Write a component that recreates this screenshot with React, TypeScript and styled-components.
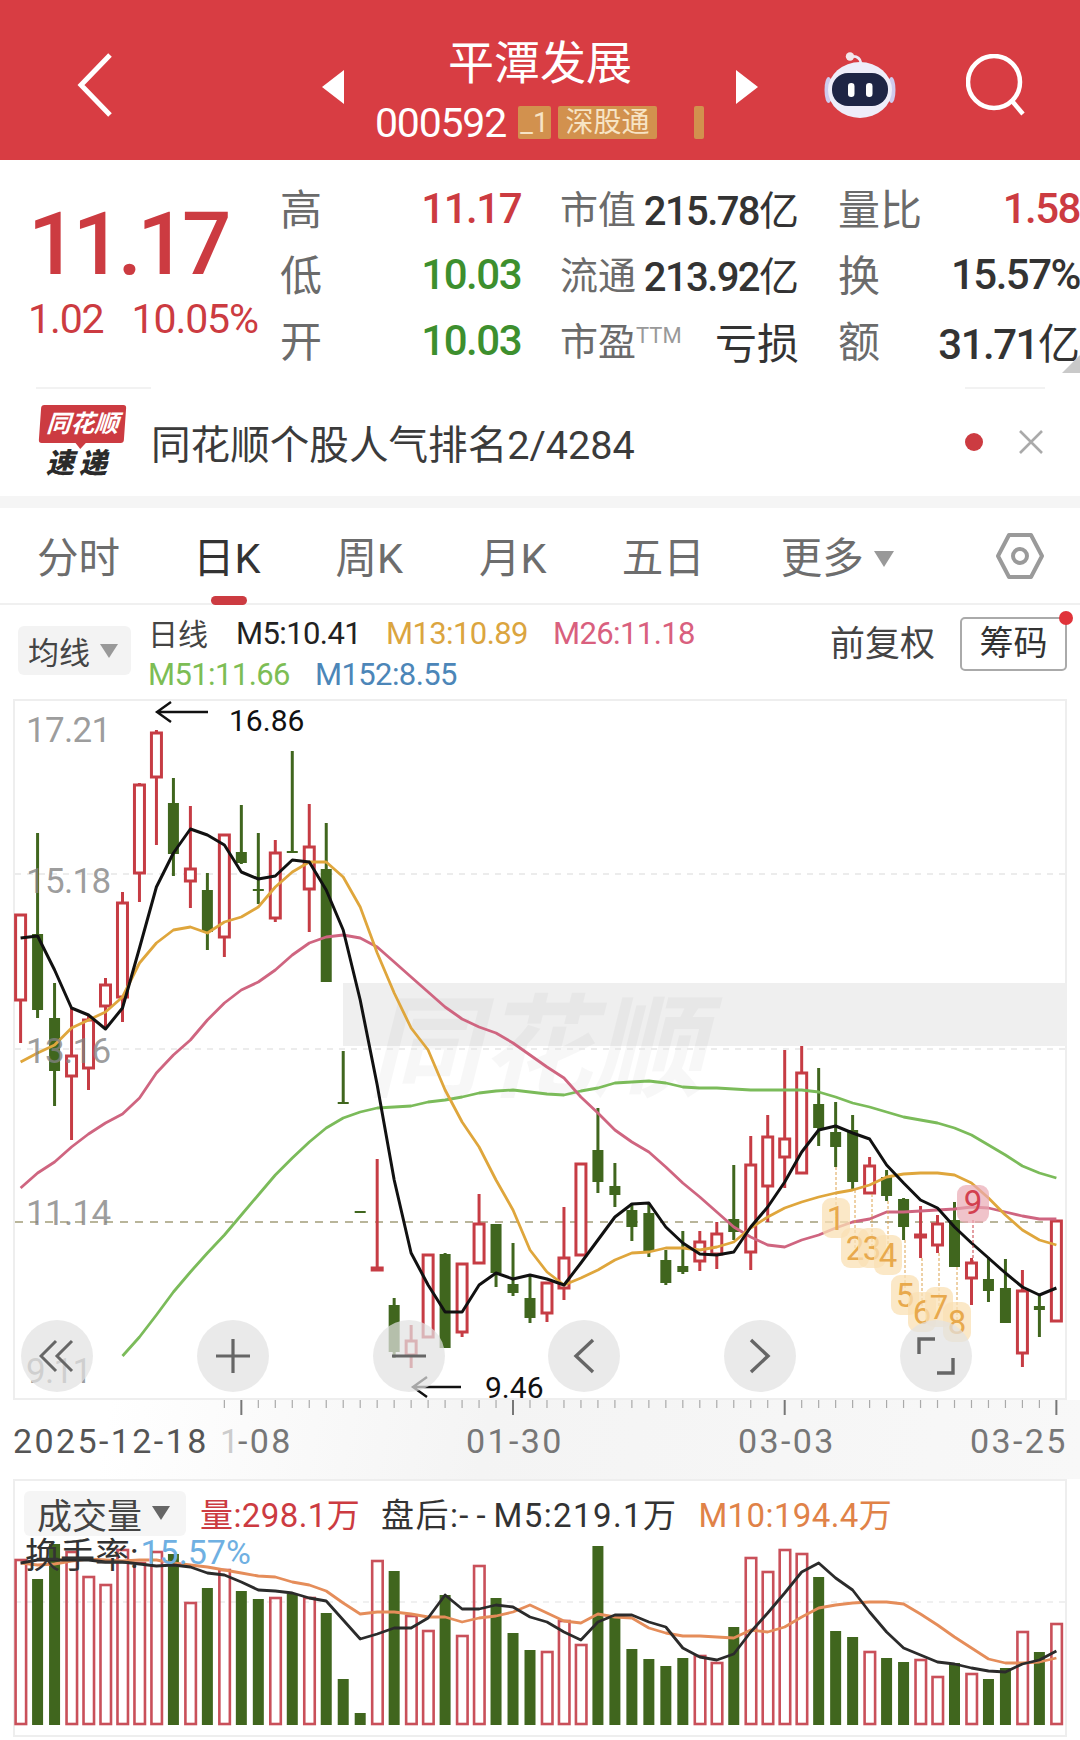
import React from "react";
import styled, { createGlobalStyle } from "styled-components";

const FONT = `Roboto, "Noto Sans CJK SC", sans-serif`;
const RED = "#cc3b41";
const GREEN = "#3d8f2e";
const CANDLE_RED = "#c63c44";
const CANDLE_GREEN = "#40661e";

const GlobalStyle = createGlobalStyle`
  html, body { margin: 0; padding: 0; background: #fff; }
  * { box-sizing: border-box; }
`;

const px = (i: number) => 20.6 + 16.98 * i;
const path = (ys: number[], start = 0) =>
  ys.map((y, i) => `${i === 0 ? "M" : "L"}${px(start + i).toFixed(1)} ${y}`).join(" ");

// wick top, body top, body bottom, wick bottom, colour
type Candle = [number, number, number, number, "r" | "g"];
const candles: Candle[] = [
  [915, 915, 1000, 1043, "r"],
  [833, 934, 1010, 1018, "g"],
  [983, 1018, 1071, 1106, "g"],
  [1008, 1056, 1076, 1140, "r"],
  [1015, 1020, 1068, 1090, "r"],
  [978, 985, 1006, 1028, "r"],
  [892, 903, 997, 1022, "r"],
  [783, 785, 873, 902, "r"],
  [730, 733, 777, 845, "r"],
  [778, 803, 854, 876, "g"],
  [806, 869, 881, 908, "r"],
  [873, 890, 932, 950, "g"],
  [834, 835, 937, 957, "r"],
  [805, 852, 863, 864, "g"],
  [833, 889, 891, 904, "g"],
  [840, 853, 918, 922, "r"],
  [751, 851, 853, 853, "g"],
  [804, 847, 889, 932, "r"],
  [823, 869, 982, 982, "g"],
  [1051, 1102, 1104, 1104, "g"],
  [1211, 1211, 1213, 1213, "g"],
  [1159, 1268, 1269, 1270, "r"],
  [1298, 1305, 1352, 1358, "g"],
  [1325, 1341, 1355, 1368, "r"],
  [1254, 1255, 1337, 1337, "r"],
  [1253, 1254, 1348, 1348, "g"],
  [1264, 1264, 1332, 1337, "r"],
  [1194, 1224, 1263, 1263, "r"],
  [1224, 1224, 1273, 1287, "g"],
  [1243, 1284, 1293, 1296, "g"],
  [1275, 1298, 1318, 1323, "g"],
  [1282, 1283, 1313, 1322, "r"],
  [1207, 1258, 1288, 1300, "r"],
  [1164, 1164, 1255, 1256, "r"],
  [1108, 1150, 1182, 1193, "g"],
  [1163, 1186, 1195, 1207, "g"],
  [1203, 1210, 1227, 1241, "g"],
  [1203, 1213, 1252, 1257, "g"],
  [1250, 1260, 1283, 1285, "g"],
  [1231, 1266, 1272, 1274, "g"],
  [1231, 1242, 1261, 1271, "r"],
  [1222, 1234, 1254, 1269, "r"],
  [1165, 1219, 1232, 1240, "g"],
  [1136, 1165, 1252, 1270, "r"],
  [1115, 1137, 1186, 1222, "r"],
  [1050, 1139, 1157, 1188, "r"],
  [1046, 1073, 1173, 1174, "r"],
  [1068, 1104, 1128, 1146, "g"],
  [1102, 1132, 1147, 1167, "g"],
  [1115, 1130, 1182, 1190, "g"],
  [1157, 1166, 1193, 1194, "r"],
  [1170, 1177, 1196, 1201, "g"],
  [1198, 1199, 1227, 1240, "g"],
  [1206, 1235, 1236, 1258, "r"],
  [1215, 1224, 1245, 1253, "r"],
  [1202, 1220, 1267, 1267, "g"],
  [1258, 1263, 1278, 1305, "r"],
  [1257, 1279, 1291, 1302, "g"],
  [1259, 1288, 1323, 1323, "g"],
  [1270, 1291, 1353, 1367, "r"],
  [1295, 1306, 1310, 1337, "g"],
  [1220, 1221, 1321, 1321, "r"],
];

const ma5 = [938, 936, 970, 1008, 1015, 1029, 1008, 948, 887, 853, 829, 835, 845, 872, 879, 876, 860, 862, 890, 930, 1000, 1085, 1180, 1253, 1285, 1312, 1312, 1285, 1273, 1279, 1275, 1279, 1285, 1263, 1240, 1217, 1204, 1203, 1227, 1243, 1254, 1255, 1252, 1227, 1207, 1182, 1152, 1130, 1126, 1133, 1139, 1165, 1183, 1200, 1208, 1227, 1243, 1258, 1273, 1287, 1295, 1288];
const ma13 = [1062, 1053, 1045, 1028, 1020, 1012, 997, 963, 943, 930, 927, 933, 922, 917, 907, 887, 872, 862, 862, 877, 907, 953, 993, 1028, 1050, 1090, 1122, 1147, 1180, 1210, 1250, 1272, 1285, 1278, 1270, 1260, 1253, 1252, 1248, 1248, 1250, 1247, 1242, 1228, 1217, 1208, 1202, 1197, 1193, 1190, 1185, 1177, 1174, 1173, 1173, 1175, 1183, 1198, 1215, 1230, 1240, 1245];
const ma26 = [1188, 1173, 1162, 1147, 1134, 1123, 1114, 1098, 1073, 1055, 1040, 1020, 1003, 990, 982, 970, 955, 943, 937, 935, 938, 947, 962, 977, 992, 1007, 1019, 1027, 1033, 1043, 1055, 1067, 1078, 1097, 1113, 1130, 1142, 1152, 1167, 1183, 1197, 1212, 1227, 1237, 1245, 1247, 1240, 1235, 1228, 1222, 1219, 1212, 1212, 1211, 1210, 1209, 1207, 1208, 1212, 1216, 1219, 1219];
const ma51 = [1356, 1337, 1315, 1292, 1272, 1253, 1235, 1215, 1195, 1175, 1158, 1142, 1128, 1118, 1112, 1108, 1107, 1106, 1102, 1100, 1097, 1093, 1091, 1090, 1092, 1094, 1095, 1091, 1088, 1083, 1082, 1081, 1083, 1087, 1088, 1088, 1089, 1090, 1090, 1090, 1090, 1092, 1097, 1103, 1107, 1112, 1117, 1120, 1123, 1128, 1135, 1145, 1155, 1166, 1173, 1178];

// volume bars, y of the top edge
const volumes: [number, "r" | "g"][] = [
  [1560, "r"], [1579, "g"], [1544, "g"], [1552, "r"], [1577, "r"], [1585, "r"], [1550, "r"], [1563, "r"], [1552, "r"], [1554, "g"],
  [1603, "r"], [1588, "g"], [1570, "r"], [1591, "g"], [1599, "g"], [1598, "r"], [1594, "g"], [1598, "r"], [1613, "g"], [1679, "g"],
  [1713, "g"], [1561, "r"], [1571, "g"], [1616, "r"], [1631, "r"], [1595, "g"], [1636, "r"], [1566, "r"], [1598, "g"], [1633, "g"],
  [1650, "g"], [1652, "r"], [1621, "r"], [1645, "r"], [1546, "g"], [1615, "g"], [1649, "g"], [1659, "g"], [1666, "g"], [1658, "g"],
  [1656, "r"], [1663, "r"], [1627, "g"], [1558, "r"], [1572, "r"], [1550, "r"], [1554, "r"], [1577, "g"], [1631, "g"], [1637, "g"],
  [1652, "r"], [1658, "g"], [1662, "g"], [1660, "r"], [1677, "r"], [1663, "g"], [1674, "r"], [1679, "g"], [1668, "g"], [1632, "r"],
  [1652, "g"], [1624, "r"],
];
const volMa5 = [1563, 1560, 1560, 1560, 1560, 1562, 1562, 1564, 1566, 1565, 1567, 1573, 1575, 1582, 1590, 1591, 1593, 1598, 1601, 1620, 1639, 1634, 1628, 1628, 1618, 1595, 1609, 1609, 1605, 1607, 1617, 1622, 1632, 1640, 1622, 1615, 1615, 1622, 1627, 1648, 1657, 1660, 1654, 1632, 1613, 1593, 1572, 1563, 1578, 1590, 1612, 1632, 1648, 1655, 1662, 1664, 1668, 1671, 1672, 1664, 1660, 1651];
const volMa10 = [1563, 1565, 1564, 1561, 1559, 1560, 1561, 1560, 1560, 1563, 1565, 1567, 1570, 1573, 1576, 1577, 1582, 1585, 1591, 1603, 1614, 1612, 1612, 1614, 1617, 1617, 1622, 1618, 1616, 1612, 1605, 1613, 1621, 1623, 1614, 1617, 1618, 1628, 1633, 1636, 1636, 1637, 1638, 1630, 1632, 1627, 1617, 1608, 1605, 1603, 1602, 1602, 1604, 1614, 1625, 1637, 1648, 1659, 1663, 1663, 1662, 1658];

const badges = [
  { n: "1", x: 836, y: 1218, from: 1167 },
  { n: "2", x: 855, y: 1248, from: 1190 },
  { n: "3", x: 872, y: 1248, from: 1194 },
  { n: "4", x: 888, y: 1255, from: 1201 },
  { n: "5", x: 905, y: 1295, from: 1240 },
  { n: "6", x: 922, y: 1312, from: 1258 },
  { n: "7", x: 939, y: 1307, from: 1253 },
  { n: "8", x: 957, y: 1322, from: 1267 },
];

function CandleMark({ c, i }: { c: Candle; i: number }) {
  const x = px(i);
  const red = c[4] === "r";
  const color = red ? CANDLE_RED : CANDLE_GREEN;
  return (
    <g>
      <line x1={x} x2={x} y1={c[0]} y2={c[3]} stroke={color} strokeWidth={3} />
      {red ? (
        <rect x={x - 5} y={c[1]} width={10} height={Math.max(c[2] - c[1], 2)} fill="#fff" stroke={color} strokeWidth={3} />
      ) : (
        <rect x={x - 5.5} y={c[1]} width={11} height={c[2] - c[1]} fill={color} />
      )}
    </g>
  );
}

function KlineChart() {
  return (
    <ChartSvg viewBox="13 699 1054 701">
      <rect x={343} y={983} width={724} height={63} fill="#efefef" />
      <text x={368} y={1088} fontSize={112} fontStyle="italic" fontWeight={700} fill="#000" fillOpacity={0.03} fontFamily={FONT}>
        同花顺
      </text>
      <line x1={15} x2={1065} y1={874} y2={874} stroke="#e6e6e6" strokeWidth={1.5} strokeDasharray="6 6" />
      <line x1={15} x2={1065} y1={1049} y2={1049} stroke="#e6e6e6" strokeWidth={1.5} strokeDasharray="6 6" />
      <line x1={15} x2={1065} y1={1222} y2={1222} stroke="#b9b59a" strokeWidth={2} strokeDasharray="8 7" />
      {candles.map((c, i) => (
        <CandleMark key={i} c={c} i={i} />
      ))}
      <path d={path(ma51, 6)} fill="none" stroke="#7bbb5a" strokeWidth={2.8} strokeLinejoin="round" />
      <path d={path(ma26)} fill="none" stroke="#cf6580" strokeWidth={2.8} strokeLinejoin="round" />
      <path d={path(ma13)} fill="none" stroke="#dfa63c" strokeWidth={2.8} strokeLinejoin="round" />
      <path d={path(ma5)} fill="none" stroke="#111" strokeWidth={3} strokeLinejoin="round" />
      {badges.map((b) => (
        <line key={b.n} x1={b.x} x2={b.x} y1={b.from} y2={b.y} stroke="#dca24f" strokeWidth={1} strokeDasharray="3 2" />
      ))}
      {badges.map((b) => (
        <g key={b.n}>
          <rect x={b.x - 14} y={b.y - 20} width={28} height={40} rx={9} fill="#fae0b4" opacity={0.75} />
          <text x={b.x} y={b.y + 12} fontSize={33} textAnchor="middle" fill="#e8a94c" fontFamily={FONT}>
            {b.n}
          </text>
        </g>
      ))}
      <line x1={973} x2={973} y1={1220} y2={1263} stroke={CANDLE_RED} strokeWidth={1} strokeDasharray="3 2" />
      <rect x={957} y={1185} width={32} height={38} rx={9} fill="#e9a9b4" opacity={0.7} />
      <text x={973} y={1214} fontSize={33} textAnchor="middle" fill="#d3404f" fontFamily={FONT}>
        9
      </text>
      <g fill="rgba(130,130,130,0.78)" fontSize={35} fontFamily={FONT} letterSpacing={-0.7}>
        <text x={26} y={742}>17.21</text>
        <text x={26} y={893}>15.18</text>
        <text x={26} y={1063}>13.16</text>
        <text x={26} y={1225}>11.14</text>
        <text x={26} y={1383}>9.11</text>
      </g>
      <g fill="none" stroke="#111" strokeWidth={2.4}>
        <path d="M208 712H157M171 702L157 712L171 722" />
        <path d="M461 1387H413M427 1377L413 1387L427 1397" />
      </g>
      <g fill="#111" fontSize={30} fontFamily={FONT}>
        <text x={229} y={731}>16.86</text>
        <text x={485} y={1398}>9.46</text>
      </g>
    </ChartSvg>
  );
}

function Axis() {
  const ticks = [];
  for (let i = 12; i <= 61; i++) {
    const major = (i - 13) % 16 === 0;
    ticks.push(
      <line key={i} x1={px(i)} x2={px(i)} y1={1400} y2={major ? 1415 : 1408} stroke={major ? "#777" : "#aaa"} strokeWidth={major ? 2 : 1.2} />
    );
  }
  return (
    <AxisSvg viewBox="0 1400 1080 79">
      {ticks}
      <g fontSize={34} fontFamily={FONT} letterSpacing={2.4} fill="#777">
        <text x={13} y={1453} fill="#555">2025-12-18</text>
        <text x={220} y={1453} fill="#ccc">1</text>
        <text x={238} y={1453}>-08</text>
        <text x={466} y={1453}>01-30</text>
        <text x={738} y={1453}>03-03</text>
        <text x={970} y={1453}>03-25</text>
      </g>
    </AxisSvg>
  );
}

function VolumeChart() {
  return (
    <VolumeSvg viewBox="13 1479 1054 258">
      <line x1={15} x2={1065} y1={1602} y2={1602} stroke="#ececec" strokeWidth={1.5} strokeDasharray="6 6" />
      {volumes.map(([top, kind], i) =>
        kind === "r" ? (
          <rect key={i} x={px(i) - 5} y={top} width={10.5} height={1724 - top} fill="none" stroke="#c9505a" strokeWidth={2.6} />
        ) : (
          <rect key={i} x={px(i) - 5.5} y={top} width={11} height={1725 - top} fill={CANDLE_GREEN} />
        )
      )}
      <path d={path(volMa10)} fill="none" stroke="#e58d5a" strokeWidth={2.8} strokeLinejoin="round" />
      <path d={path(volMa5)} fill="none" stroke="#2b2b2b" strokeWidth={2.8} strokeLinejoin="round" />
    </VolumeSvg>
  );
}

function Robot() {
  return (
    <svg width="72" height="66" viewBox="0 0 72 66">
      <path d="M28 4.500C33 4 36 6 37 11" stroke="#eceaf6" strokeWidth="2.6" fill="none" />
      <circle cx="26" cy="4.500" r="4.200" fill="#f3e6ea" />
      <ellipse cx="4.500" cy="38" rx="4" ry="13" fill="#cfcbee" />
      <ellipse cx="67.500" cy="38" rx="4" ry="13" fill="#cfcbee" />
      <ellipse cx="36" cy="38" rx="32" ry="28" fill="#eeedf9" />
      <rect x="8" y="21" width="56" height="33" rx="16" fill="#1e2545" />
      <rect x="24" y="31" width="6.500" height="14" rx="3.200" fill="#fff" />
      <rect x="42" y="31" width="6.500" height="14" rx="3.200" fill="#fff" />
    </svg>
  );
}

function App() {
  return (
    <Page>
      <GlobalStyle />
      <Header>
        <LeftCell>
          <svg width="38" height="66" viewBox="0 0 38 66">
            <path d="M33 3L4 33L33 63" fill="none" stroke="#fff" strokeWidth="5" />
          </svg>
        </LeftCell>
        <CenterCell>
          <Arrow viewBox="0 0 22 34">
            <path d="M22 0L0 17L22 34Z" fill="#fff" />
          </Arrow>
          <TitleStack>
            <Title>平潭发展</Title>
            <SubRow>
              <Code>000592</Code>
              <Tag $w={33}>_1</Tag>
              <Tag $w={99}>深股通</Tag>
              <TagStub />
            </SubRow>
          </TitleStack>
          <Arrow viewBox="0 0 22 34">
            <path d="M0 0L22 17L0 34Z" fill="#fff" />
          </Arrow>
        </CenterCell>
        <RightCell>
          <Robot />
          <svg width="60" height="62" viewBox="0 0 60 62">
            <circle cx="28" cy="28" r="26" fill="none" stroke="#fff" strokeWidth="4.5" />
            <path d="M46 47L57 60" stroke="#fff" strokeWidth="4.5" />
          </svg>
        </RightCell>
      </Header>
      <Quote>
        <PriceBlock>
          <Price>11.17</Price>
          <ChangeRow>
            <span>1.02</span>
            <span>10.05%</span>
          </ChangeRow>
        </PriceBlock>
        <StatGrid>
          <Stat><StatLabel $big>高</StatLabel><StatValue $color={RED}>11.17</StatValue></Stat>
          <Stat><StatLabel>市值</StatLabel><StatValue $narrow>215.78<Unit>亿</Unit></StatValue></Stat>
          <Stat><StatLabel $big>量比</StatLabel><StatValue $color={RED}>1.58</StatValue></Stat>
          <Stat><StatLabel $big>低</StatLabel><StatValue $color={GREEN}>10.03</StatValue></Stat>
          <Stat><StatLabel>流通</StatLabel><StatValue $narrow>213.92<Unit>亿</Unit></StatValue></Stat>
          <Stat><StatLabel $big>换</StatLabel><StatValue>15.57%</StatValue></Stat>
          <Stat><StatLabel $big>开</StatLabel><StatValue $color={GREEN}>10.03</StatValue></Stat>
          <Stat><StatLabel>市盈<Sup>TTM</Sup></StatLabel><StatValue><Unit>亏损</Unit></StatValue></Stat>
          <Stat><StatLabel $big>额</StatLabel><StatValue>31.71<Unit>亿</Unit></StatValue></Stat>
        </StatGrid>
        <Corner />
      </Quote>
      <News>
        <Logo>
          <LogoTag>同花顺</LogoTag>
          <LogoWord>速递</LogoWord>
        </Logo>
        <NewsText>同花顺个股人气排名2/4284</NewsText>
        <NewsDot />
        <svg width="26" height="26" viewBox="0 0 26 26">
          <path d="M2 2L24 24M24 2L2 24" stroke="#aaa" strokeWidth="2.6" />
        </svg>
      </News>
      <Gap />
      <TabBar>
        <Tab>分时</Tab>
        <Tab $active>日K</Tab>
        <Tab>周K</Tab>
        <Tab>月K</Tab>
        <Tab>五日</Tab>
        <Tab>更多<Caret $size={10} /></Tab>
        <Settings>
          <svg width="50" height="48" viewBox="0 0 50 48">
            <path d="M14 3H36L47 24L36 45H14L3 24Z" fill="none" stroke="#9a9a9a" strokeWidth="4" strokeLinejoin="round" />
            <circle cx="25" cy="24" r="7" fill="none" stroke="#9a9a9a" strokeWidth="4" />
          </svg>
        </Settings>
      </TabBar>
      <IndicatorBar>
        <Selector>均线<Caret $size={9} /></Selector>
        <MaBlock>
          <MaRow>
            <MaName>日线</MaName>
            <MaValue $color="#222" $w={150}>M5:10.41</MaValue>
            <MaValue $color="#dba53f" $w={167}>M13:10.89</MaValue>
            <MaValue $color="#d9607e">M26:11.18</MaValue>
          </MaRow>
          <MaRow>
            <MaValue $color="#7dbd55" $w={167}>M51:11.66</MaValue>
            <MaValue $color="#4c86b8">M152:8.55</MaValue>
          </MaRow>
        </MaBlock>
        <Adjust>前复权</Adjust>
        <ChipButton>筹码</ChipButton>
      </IndicatorBar>
      <ChartPanel>
        <KlineChart />
        <ControlRow>
          <RoundButton>
            <svg width="36" height="36" viewBox="0 0 36 36">
              <path d="M17 3L2 18L17 33M33 3L18 18L33 33" fill="none" stroke="#666" strokeWidth="3" />
            </svg>
          </RoundButton>
          <RoundButton>
            <svg width="36" height="36" viewBox="0 0 36 36">
              <path d="M18 1V35M1 18H35" fill="none" stroke="#666" strokeWidth="3.2" />
            </svg>
          </RoundButton>
          <RoundButton>
            <svg width="36" height="36" viewBox="0 0 36 36">
              <path d="M1 18H35" fill="none" stroke="#666" strokeWidth="3.2" />
            </svg>
          </RoundButton>
          <RoundButton>
            <svg width="22" height="36" viewBox="0 0 22 36">
              <path d="M20 2L3 18L20 34" fill="none" stroke="#666" strokeWidth="3.4" />
            </svg>
          </RoundButton>
          <RoundButton>
            <svg width="22" height="36" viewBox="0 0 22 36">
              <path d="M2 2L19 18L2 34" fill="none" stroke="#666" strokeWidth="3.4" />
            </svg>
          </RoundButton>
          <RoundButton>
            <svg width="38" height="38" viewBox="0 0 38 38">
              <path d="M18 2H2V17M20 36H36V21" fill="none" stroke="#666" strokeWidth="3.4" />
            </svg>
          </RoundButton>
        </ControlRow>
      </ChartPanel>
      <AxisStrip>
        <Axis />
      </AxisStrip>
      <VolumePanel>
        <VolumeChart />
        <VolumeLegend>
          <LegendRow>
            <VolumeSelector>成交量<Caret $size={9} $color="#666" /></VolumeSelector>
            <LegendText $color={RED}>量:298.1万</LegendText>
            <LegendText $color="#333" $spacing={1.4}>盘后:<WideDash>--</WideDash>M5:219.1万</LegendText>
            <LegendText $color="#e08248">M10:194.4万</LegendText>
          </LegendRow>
          <TurnoverRow>
            换手率:<TurnoverValue>15.57%</TurnoverValue>
          </TurnoverRow>
        </VolumeLegend>
      </VolumePanel>
    </Page>
  );
}

const Page = styled.div`
  position: relative;
  width: 1080px;
  height: 1740px;
  overflow: hidden;
  background: #fff;
  font-family: ${FONT};
`;
const Header = styled.header`
  display: grid;
  grid-template-columns: 322px 436px 1fr;
  height: 160px;
  background: #d83d43;
`;
const LeftCell = styled.div`
  display: flex;
  align-items: center;
  padding: 10px 0 0 77px;
`;
const CenterCell = styled.div`
  display: flex;
  justify-content: space-between;
  align-items: center;
  padding-top: 14px;
`;
const Arrow = styled.svg`
  width: 22px;
  height: 34px;
`;
const TitleStack = styled.div`
  display: flex;
  flex-direction: column;
  align-items: center;
  padding-top: 6px;
`;
const Title = styled.div`
  color: #fff;
  font-size: 46px;
  line-height: 50px;
  margin-bottom: 15px;
`;
const SubRow = styled.div`
  display: flex;
  align-items: center;
  height: 40px;
  width: 330px;
`;
const Code = styled.span`
  color: #fff;
  font-size: 41px;
  letter-spacing: -1.2px;
  width: 143px;
`;
const Tag = styled.span<{ $w: number }>`
  width: ${(p) => p.$w}px;
  height: 33px;
  margin-right: 7px;
  background: #d2914e;
  color: #f7e4c5;
  font-size: 28px;
  line-height: 33px;
  text-align: center;
  border-radius: 2px;
`;
const TagStub = styled.span`
  width: 10px;
  height: 33px;
  margin-left: 30px;
  background: #d2914e;
  border-radius: 2px;
`;
const RightCell = styled.div`
  display: flex;
  align-items: center;
  gap: 70px;
  padding: 10px 0 0 66px;
`;
const Quote = styled.section`
  position: relative;
  display: flex;
  height: 227px;
  padding: 15px 0 0 28px;
`;
const PriceBlock = styled.div`
  width: 253px;
`;
const Price = styled.div`
  color: ${RED};
  font-size: 87px;
  font-weight: 500;
  line-height: 90px;
  letter-spacing: -4.6px;
  margin: 24px 0 0 0;
`;
const ChangeRow = styled.div`
  display: flex;
  gap: 28px;
  color: ${RED};
  font-size: 41px;
  line-height: 46px;
  letter-spacing: -1.1px;
  margin-top: 7px;
`;
const StatGrid = styled.div`
  display: grid;
  grid-template-columns: 240px 238px 241px;
  grid-auto-rows: 66px;
  column-gap: 40px;
`;
const Stat = styled.div`
  display: flex;
  justify-content: space-between;
  align-items: center;
`;
const StatLabel = styled.span<{ $big?: boolean }>`
  color: #6b6b6b;
  font-size: ${(p) => (p.$big ? 42 : 38)}px;
  margin-top: -4px;
  margin-left: -1px;
`;
const StatValue = styled.span<{ $color?: string; $narrow?: boolean }>`
  color: ${(p) => p.$color ?? "#333"};
  font-size: ${(p) => (p.$narrow ? 40 : 42)}px;
  font-weight: 500;
  letter-spacing: ${(p) => (p.$narrow ? -1.6 : -1.5)}px;
`;
const Unit = styled.span`
  font-weight: 400;
  letter-spacing: 0;
`;
const Sup = styled.sup`
  font-size: 22px;
  color: #999;
  vertical-align: 12px;
  line-height: 0;
`;
const Corner = styled.span`
  position: absolute;
  right: 0;
  bottom: 14px;
  border-left: 18px solid transparent;
  border-bottom: 18px solid #c9c9c9;
`;
const News = styled.section`
  display: flex;
  align-items: center;
  height: 109px;
  padding: 0 36px;
  background:
    linear-gradient(#f2f2f2, #f2f2f2) 36px 0 / 115px 2px no-repeat,
    linear-gradient(#f2f2f2, #f2f2f2) 965px 0 / 80px 2px no-repeat;
`;
const Logo = styled.div`
  display: flex;
  flex-direction: column;
  align-items: center;
  width: 88px;
  margin: 2px 25px 0 2px;
`;
const LogoTag = styled.div`
  position: relative;
  width: 85px;
  height: 38px;
  background: ${RED};
  border-radius: 3px;
  color: #fff;
  font-size: 24px;
  font-weight: 700;
  font-style: italic;
  line-height: 38px;
  text-align: center;
  white-space: nowrap;
  transform: skewX(-4deg);
  &::after {
    content: "";
    position: absolute;
    left: 36px;
    bottom: -6px;
    border-left: 6px solid transparent;
    border-right: 6px solid transparent;
    border-top: 7px solid ${RED};
  }
`;
const LogoWord = styled.div`
  color: #2a2a2a;
  font-size: 28px;
  font-weight: 900;
  font-style: italic;
  letter-spacing: 5px;
  line-height: 32px;
  margin: 5px 0 0 -6px;
`;
const NewsText = styled.div`
  flex: 1;
  color: #3b3b3b;
  font-size: 39.6px;
`;
const NewsDot = styled.span`
  width: 18px;
  height: 18px;
  border-radius: 50%;
  background: ${RED};
  margin-right: 35px;
`;
const Gap = styled.div`
  height: 12px;
  background: #f5f5f5;
`;
const TabBar = styled.nav`
  display: flex;
  align-items: center;
  gap: 73px;
  height: 97px;
  padding: 6px 36px 0 37px;
  border-bottom: 2px solid #f0f0f0;
`;
const Tab = styled.div<{ $active?: boolean }>`
  position: relative;
  display: flex;
  align-items: center;
  color: ${(p) => (p.$active ? "#333" : "#6d6d6d")};
  font-size: 41.500px;
  line-height: 50px;
  &:first-child {
    margin-right: 5px;
  }
  &:nth-child(2) {
    margin: 0 2px 0 -5px;
  }
  &:nth-child(3) {
    margin-right: 3px;
  }
  &:nth-child(4) {
    margin-right: 2px;
  }
  &:nth-child(6) {
    margin-left: 3px;
  }
  ${(p) =>
    p.$active &&
    `&::after {
      content: "";
      position: absolute;
      left: 18px;
      bottom: -21px;
      width: 36px;
      height: 9px;
      border-radius: 5px;
      background: ${RED};
    }`}
`;
const Caret = styled.i<{ $size: number; $color?: string }>`
  display: inline-block;
  margin-left: 10px;
  border-left: ${(p) => p.$size}px solid transparent;
  border-right: ${(p) => p.$size}px solid transparent;
  border-top: ${(p) => p.$size * 1.6}px solid ${(p) => p.$color ?? "#999"};
`;
const Settings = styled.div`
  display: flex;
  margin-left: auto;
  margin-right: -1px;
  margin-top: -6px;
`;
const IndicatorBar = styled.div`
  display: flex;
  align-items: flex-start;
  height: 94px;
  padding: 0 13px 0 18px;
`;
const Selector = styled.div`
  display: flex;
  align-items: center;
  width: 113px;
  height: 49px;
  margin-top: 21px;
  padding-left: 10px;
  background: #f3f3f3;
  border-radius: 6px;
  color: #444;
  font-size: 31px;
`;
const MaBlock = styled.div`
  flex: 1;
  padding: 8px 0 0 17px;
`;
const MaRow = styled.div`
  display: flex;
  align-items: center;
  height: 41px;
`;
const MaName = styled.span`
  width: 88px;
  color: #444;
  font-size: 30px;
  margin-top: -4px;
`;
const MaValue = styled.span<{ $color: string; $w?: number }>`
  width: ${(p) => (p.$w ? `${p.$w}px` : "auto")};
  color: ${(p) => p.$color};
  font-size: 31px;
  letter-spacing: -0.6px;
`;
const Adjust = styled.span`
  margin: 17px 25px 0 0;
  color: #444;
  font-size: 35px;
  line-height: 46px;
`;
const ChipButton = styled.div`
  position: relative;
  width: 107px;
  height: 54px;
  margin-top: 12px;
  border: 2px solid #aaa;
  border-radius: 5px;
  color: #333;
  font-size: 34px;
  line-height: 48px;
  text-align: center;
  &::after {
    content: "";
    position: absolute;
    top: -8px;
    right: -8px;
    width: 14px;
    height: 14px;
    border-radius: 50%;
    background: #e0333a;
  }
`;
const ChartPanel = styled.section`
  position: relative;
  width: 1054px;
  height: 701px;
  margin-left: 13px;
  box-shadow: inset 0 0 0 2px #eee;
`;
const ChartSvg = styled.svg`
  display: block;
  width: 1054px;
  height: 701px;
`;
const ControlRow = styled.div`
  position: absolute;
  left: 8px;
  right: 95px;
  top: 621px;
  display: flex;
  justify-content: space-between;
`;
const RoundButton = styled.div`
  display: flex;
  align-items: center;
  justify-content: center;
  width: 72px;
  height: 72px;
  border-radius: 50%;
  background: rgba(226, 226, 226, 0.72);
`;
const AxisStrip = styled.div`
  height: 79px;
  background: linear-gradient(100deg, #fff 10%, #f4f4f4 45%, #f8f8f8 100%);
`;
const AxisSvg = styled.svg`
  display: block;
  width: 1080px;
  height: 79px;
`;
const VolumePanel = styled.section`
  position: relative;
  width: 1054px;
  height: 258px;
  margin-left: 13px;
  background: #fff;
  box-shadow: inset 0 0 0 2px #eee;
`;
const VolumeSvg = styled.svg`
  display: block;
  width: 1054px;
  height: 258px;
`;
const VolumeLegend = styled.div`
  position: absolute;
  left: 11px;
  top: 10px;
`;
const LegendRow = styled.div`
  display: flex;
  align-items: center;
`;
const VolumeSelector = styled.div`
  display: flex;
  align-items: center;
  width: 162px;
  height: 45px;
  padding-left: 13px;
  margin-right: 14px;
  background: #f5f5f5;
  border-radius: 6px;
  color: #444;
  font-size: 35px;
`;
const LegendText = styled.span<{ $color: string; $spacing?: number }>`
  margin-right: 21px;
  color: ${(p) => p.$color};
  font-size: 33px;
  letter-spacing: ${(p) => p.$spacing ?? 0.4}px;
  white-space: nowrap;
`;
const WideDash = styled.span`
  letter-spacing: 8px;
`;
const TurnoverRow = styled.div`
  display: flex;
  align-items: center;
  height: 40px;
  margin: -5px 0 0 1px;
  color: #333;
  font-size: 35px;
`;
const TurnoverValue = styled.span`
  color: #6fb0e2;
  font-size: 34px;
  margin-left: 2px;
`;

export default App;
